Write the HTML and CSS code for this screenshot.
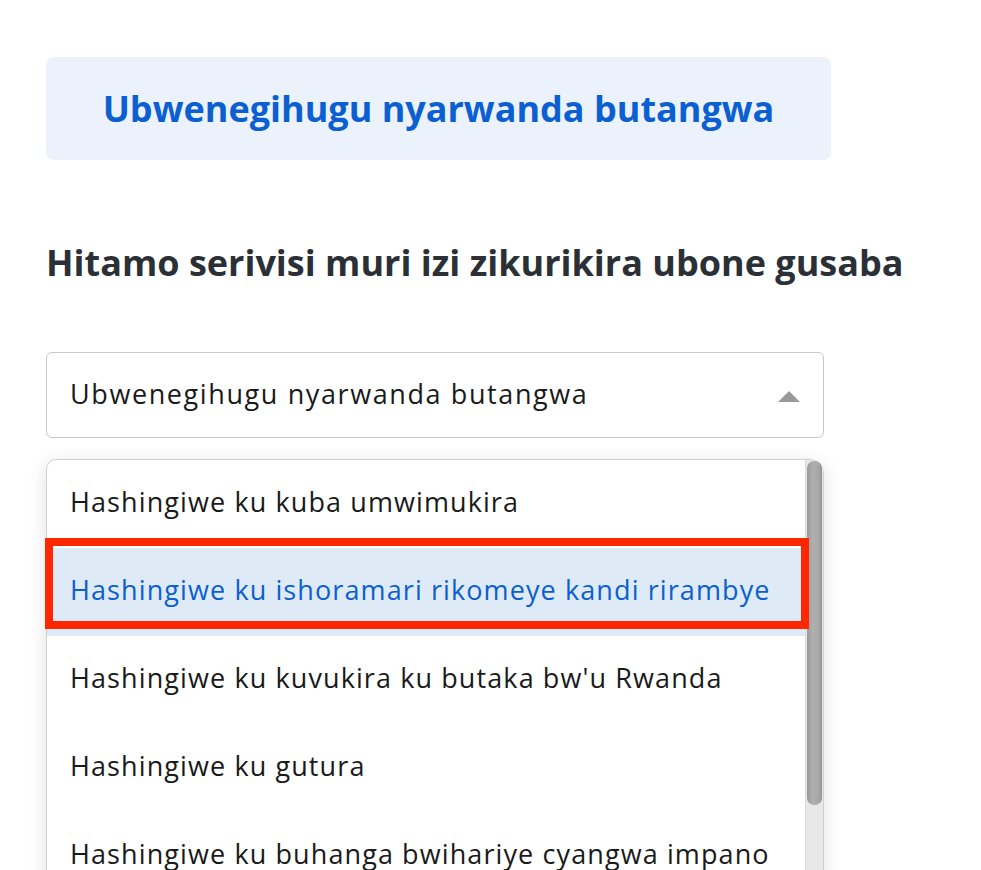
FILE: index.html
```html
<!DOCTYPE html>
<html lang="rw">
<head>
    <meta charset="UTF-8">
    <meta name="viewport" content="width=device-width, initial-scale=1.0">
    <title>Ubwenegihugu nyarwanda butangwa</title>
    <link rel="stylesheet" href="styles.css">
</head>
<body>

    <div class="page">
        <div class="title-box">
            <h1>Ubwenegihugu nyarwanda butangwa</h1>
        </div>

        <h2 class="prompt">Hitamo serivisi muri izi zikurikira ubone gusaba</h2>

        <div class="select">
            <span class="select-value">Ubwenegihugu nyarwanda butangwa</span>
            <span class="select-arrow"></span>
        </div>

        <div class="dropdown">
            <ul class="options">
                <li class="option">Hashingiwe ku kuba umwimukira</li>
                <li class="option active">
                    Hashingiwe ku ishoramari rikomeye kandi rirambye
                    <span class="marker"></span>
                </li>
                <li class="option">Hashingiwe ku kuvukira ku butaka bw'u Rwanda</li>
                <li class="option">Hashingiwe ku gutura</li>
                <li class="option">Hashingiwe ku buhanga bwihariye cyangwa impano</li>
            </ul>
            <div class="scrollbar">
                <div class="scroll-thumb"></div>
            </div>
        </div>
    </div>

</body>
</html>
```

FILE: styles.css
```css
html, body {
    overflow: hidden;
}

body {
    margin: 0;
    font-family: "Open Sans", Lato, sans-serif;
    background-color: #ffffff;
    color: #1d1f21;
}

.page {
    padding: 57px 0 0 46px;
    width: 785px;
}

.title-box {
    background-color: #ebf2fc;
    border-radius: 8px;
    height: 103px;
    display: flex;
    align-items: center;
    justify-content: center;
}

.title-box h1 {
    margin: 0;
    font-size: 36px;
    font-weight: bold;
    color: #0b5fd1;
}

.prompt {
    margin: 78px 0 0 0;
    font-size: 36px;
    font-weight: bold;
    color: #2b3036;
    white-space: nowrap;
}

.select {
    margin-top: 65px;
    width: 778px;
    height: 86px;
    box-sizing: border-box;
    border: 1px solid #c8c8c8;
    border-radius: 6px;
    display: flex;
    align-items: center;
    justify-content: space-between;
    padding: 0 23px 3px 23px;
}

.select-value {
    font-size: 27px;
    letter-spacing: 1.6px;
    color: #1a1a1a;
}

.select-arrow {
    width: 0;
    height: 0;
    border-left: 11px solid transparent;
    border-right: 11px solid transparent;
    border-bottom: 11px solid #999999;
    margin-top: 5px;
}

.dropdown {
    margin-top: 21px;
    width: 778px;
    height: 440px;
    box-sizing: border-box;
    border: 1px solid #d0d0d0;
    border-radius: 10px 14px 0 0;
    box-shadow: 0 4px 18px rgba(0, 0, 0, 0.12);
    display: flex;
}

.options {
    list-style: none;
    margin: 0;
    padding: 0;
    flex: 1;
}

.option {
    height: 88px;
    box-sizing: border-box;
    display: flex;
    align-items: center;
    padding: 0 0 5px 23px;
    font-size: 27px;
    letter-spacing: 1.1px;
    color: #1a1a1a;
    position: relative;
    white-space: nowrap;
}

.option.active {
    background-color: #dfeaf7;
    color: #0b5fd1;
}

.marker {
    position: absolute;
    top: -10px;
    left: -2px;
    right: -4px;
    height: 91px;
    box-sizing: border-box;
    border: 8px solid #ff2600;
    z-index: 1;
}

.scrollbar {
    width: 15px;
    background-color: #e8e8e8;
    border-left: 1px solid #dadada;
    border-top-right-radius: 12px;
    padding: 1px 1px 0 1px;
}

.scroll-thumb {
    height: 344px;
    border-radius: 7px;
    background: linear-gradient(to right, #9a9a9a, #b0b0b0 40%, #a6a6a6 80%, #929292);
}
```
